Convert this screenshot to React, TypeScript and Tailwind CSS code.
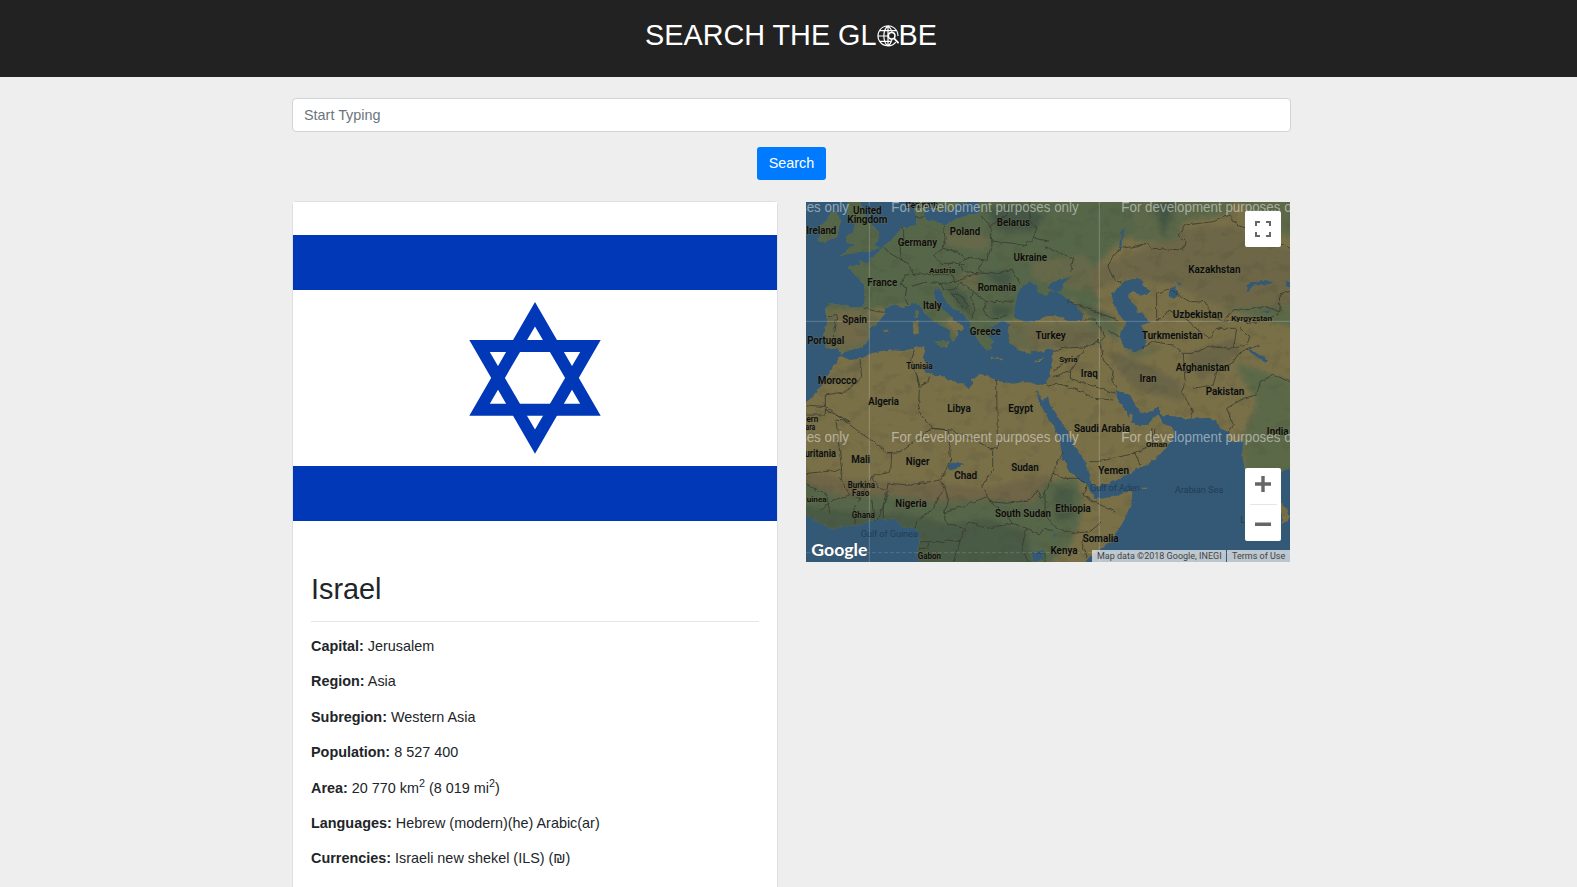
import React from "react";

const land = "#7a7048";
const sea = "#335976";

type P = string;
const europeAsia: P =
  "M250,152 L270,140 290,118 303,98 325,96 348,90 350,66 342,45 346,10 388,10 376,45 372,66 388,80 402,76 430,92 465,74 500,62 522,58 540,52 535,35 545,10 L1480,10 1480,815 1443,830 1425,870 1425,940 1405,985 1390,970 1362,900 1335,825 1327,780 1330,735 1305,742 1278,728 1290,715 1262,702 1245,676 1230,668 1160,672 1120,664 1085,660 1075,636 1058,648 1022,655 1005,628 990,600 968,592 948,586 950,602 972,640 986,668 990,655 998,660 996,682 1010,690 1042,690 1060,670 1076,656 1082,672 1095,690 1115,695 1126,712 1118,730 1104,752 1095,765 1070,790 1045,806 1012,822 980,840 945,858 900,872 880,876 870,855 866,825 850,790 822,748 796,700 768,655 748,625 744,600 740,570 748,538 757,500 760,463 742,462 728,474 705,466 690,474 655,466 640,452 625,440 628,420 620,405 632,388 622,382 605,378 585,390 565,392 575,405 570,418 560,424 582,438 570,446 578,465 556,462 540,444 528,425 512,400 508,378 485,355 455,338 430,306 424,286 414,280 400,288 405,310 428,342 455,368 490,398 486,408 470,404 472,422 460,440 454,425 445,402 425,392 400,378 378,356 362,332 345,320 325,332 300,336 280,328 258,340 256,356 235,380 208,400 208,430 186,458 150,464 124,480 114,462 80,456 72,425 82,378 74,340 95,325 150,336 188,338 196,300 192,268 168,240 140,220 152,211 182,214 178,196 200,206 225,180 Z";
const africa: P =
  "M10,630 L50,590 75,550 105,505 124,483 150,495 185,490 215,475 260,465 310,468 345,458 368,454 376,466 368,490 382,508 372,530 400,540 430,541 447,556 490,566 506,582 520,565 515,551 540,540 568,545 590,557 640,566 665,562 690,562 712,570 740,566 746,590 742,605 728,618 712,590 706,590 720,625 738,660 760,690 780,740 786,782 810,830 855,868 872,888 890,912 940,905 985,890 997,893 995,925 970,980 935,1035 875,1082 850,1110 L365,1110 350,1085 358,1045 360,1020 345,1000 305,994 285,970 240,975 205,980 180,990 135,995 95,1002 60,985 10,955 Z";
const islands: P =
  "M175,10 L190,45 205,80 236,108 234,135 222,150 236,160 200,170 160,172 123,182 146,160 168,150 138,142 142,122 160,110 165,92 150,78 140,55 145,10 Z M50,138 L62,112 55,95 80,78 90,52 112,52 120,78 112,125 75,142 Z M404,438 L446,440 440,461 418,452 Z M338,382 L356,378 356,414 342,420 Z M345,350 L354,344 353,368 344,368 Z M572,488 L610,491 608,496 572,493 Z M704,497 L732,489 722,500 708,502 Z M398,20 L430,22 425,50 405,48 Z M430,10 L520,10 498,24 480,20 460,45 440,52 Z M1440,925 L1458,940 1468,968 1462,983 1446,984 Z M250,406 l12,-3 4,6 -12,5 Z M1028,878 h16 l-4,4 h-10 Z";
const waters: P =
  "M690,262 L712,274 708,290 738,303 748,292 770,290 800,310 830,335 850,358 845,378 812,378 775,364 740,362 715,375 680,382 642,370 645,335 652,300 665,275 Z M742,276 L757,262 812,246 790,265 785,285 765,290 Z M935,296 L968,267 992,252 1024,252 1029,273 1051,288 1025,302 1000,290 984,300 992,320 1010,335 1015,354 1030,352 1036,372 1054,380 1026,390 1036,410 1036,455 1028,466 1000,468 972,456 957,422 970,402 976,382 955,355 940,322 Z M1108,278 L1126,275 1137,296 1120,310 1106,304 Z M1340,272 L1358,258 1424,260 1410,267 1362,268 1348,284 1350,294 1340,284 Z M1455,258 l20,10 v12 l-18,-8 Z M443,806 L470,802 492,806 470,822 448,826 Z M696,1072 L732,1066 728,1094 700,1100 Z M960,168 l-4,-4 10,-60 16,-8 -10,10 -8,50 Z M1382,352 l30,-6 -6,8 Z M1345,460 l60,35 -8,8 -48,-32 Z M760,1005 l8,20 -4,4 Z M1128,262 l20,2 -10,6 Z";
const borders: P =
  "M76,362 L112,362 102,400 104,430 96,452 M188,338 L230,350 256,352 M250,155 L270,175 305,195 300,165 312,130 305,98 M305,195 L325,205 340,238 318,240 300,268 320,280 315,310 325,330 M340,238 L400,235 M345,66 H375 M430,92 L435,130 430,160 400,180 425,205 470,205 495,210 M430,160 L470,170 500,190 560,195 576,150 572,90 540,60 M500,190 L480,205 490,230 550,235 535,222 550,195 M330,275 L375,262 420,265 465,262 455,235 400,240 M420,265 L430,285 460,285 480,262 520,290 545,310 560,320 645,318 M465,262 L490,250 535,232 M450,292 L480,300 505,330 500,345 M455,295 L490,340 M520,290 L515,310 525,345 515,372 M560,320 L550,345 570,372 605,370 625,355 M576,138 L640,145 675,152 700,130 750,138 M550,235 L600,235 635,222 660,265 M576,90 L620,60 625,21 M700,130 L710,100 690,80 690,21 M735,155 L770,170 820,190 812,230 M850,375 L885,375 900,400 915,425 900,440 860,455 790,460 760,470 M800,320 L860,340 900,355 955,375 M760,525 L840,480 M760,545 L812,525 835,490 860,455 M812,525 L810,550 870,570 945,595 M895,435 L905,460 910,495 940,530 935,555 950,580 M925,410 L955,422 M1025,462 L1060,440 1120,450 1150,475 1155,560 1145,590 1180,650 1175,668 M1150,475 L1175,475 1230,455 1300,460 M968,267 L940,250 924,215 935,190 960,160 1000,155 1040,145 1055,160 1150,165 1155,140 1135,125 1155,90 1240,80 1290,60 1310,90 1370,110 1470,160 M1070,374 H1085 L1105,345 1150,365 1200,410 1230,430 M1070,374 V295 L1105,283 1170,320 1215,320 1235,360 1270,380 1300,345 1400,335 1440,352 1438,300 1470,290 M1270,380 L1320,375 1350,385 1400,375 1440,352 M1230,430 L1250,400 1310,400 1300,460 M1300,460 L1340,450 1350,425 1320,400 M1180,580 L1240,570 1250,530 1300,500 1320,470 1380,450 M1278,715 L1300,690 1280,640 1330,610 1370,600 1380,560 1420,540 1470,560 M868,800 L895,800 1005,775 1060,745 1065,700 M1005,775 L1020,808 M1060,745 L1055,700 M740,575 L770,565 850,590 880,610 940,615 M590,555 L592,760 H578 V828 L560,850 548,870 570,920 M350,540 L358,580 355,650 395,700 300,770 262,773 76,635 V600 L140,590 185,545 180,495 M395,700 L455,705 578,762 M395,700 L445,705 452,800 420,855 330,870 265,865 M343,462 L335,495 350,540 360,570 M360,572 L385,560 388,545 M262,773 L275,775 272,830 215,845 M76,635 L20,630 M76,640 V660 H20 M76,645 L150,680 108,675 125,825 20,835 M125,825 L120,850 150,900 180,915 215,845 240,880 265,890 235,975 M150,900 L100,915 60,945 M180,915 L165,930 165,990 M215,915 L225,980 M20,870 L80,900 90,955 M265,865 L250,930 250,970 M345,1000 L350,980 400,940 435,875 420,855 M435,875 L445,920 430,955 445,990 495,1000 510,980 M430,955 L500,930 560,905 M360,1040 H430 L440,1035 480,1040 460,1100 M385,1040 V1060 H360 M510,980 L560,1000 640,985 680,1000 M495,1000 L480,1040 M570,920 L620,925 690,915 712,885 725,910 735,890 M570,920 L620,960 640,990 M680,1000 L720,1020 735,1000 760,1010 M680,1000 L665,1060 685,1100 M735,890 L760,835 790,850 840,850 860,870 M735,890 L735,960 770,1000 820,1015 870,1010 M760,835 L770,800 790,775 M860,870 L850,900 870,915 L945,950 M870,1010 L905,980 M855,1020 L845,1040 860,1090 M710,1075 H735 V1100";
const labels: [string, number, number, number, number?][] = [
  ["Denmark", 365, 38, 96, 25], ["United", 202, 55, 86], ["Kingdom", 202, 82, 120], ["Ireland", 64, 115, 90],
  ["Germany", 352, 153, 118], ["Poland", 495, 120, 91], ["Belarus", 640, 93, 100], ["Ukraine", 691, 198, 101],
  ["Austria", 427, 232, 78, 24], ["France", 247, 271, 90], ["Romania", 591, 287, 116], ["Italy", 397, 341, 56],
  ["Spain", 164, 384, 74], ["Greece", 556, 419, 93], ["Portugal", 77, 446, 111], ["Turkey", 752, 430, 91],
  ["Tunisia", 358, 521, 79, 25], ["Morocco", 112, 565, 117], ["Kazakhstan", 1243, 233, 157],
  ["Uzbekistan", 1193, 368, 149], ["Kyrgyzstan", 1355, 377, 122, 24], ["Turkmenistan", 1117, 430, 182],
  ["Syria", 805, 499, 55, 24], ["Iraq", 868, 544, 51], ["Iran", 1044, 560, 51], ["Afghanistan", 1208, 528, 162],
  ["Algeria", 251, 630, 92], ["Libya", 477, 650, 70], ["Egypt", 662, 650, 74], ["Pakistan", 1275, 598, 116],
  ["ern", 37, 679, 35, 25], ["ara", 31, 703, 29, 25], ["uritania", 61, 784, 94], ["Mali", 182, 804, 57],
  ["Niger", 353, 809, 71], ["Chad", 497, 850, 69], ["Sudan", 675, 828, 83], ["Burkina", 184, 877, 82, 25],
  ["Faso", 182, 902, 52, 25], ["uinea", 50, 919, 60, 24], ["Ghana", 190, 968, 69, 25], ["Nigeria", 333, 934, 94],
  ["South Sudan", 669, 966, 168], ["Gabon", 388, 1091, 70, 25], ["Saudi Arabia", 906, 709, 168],
  ["Oman", 1070, 756, 64, 24], ["India", 1433, 720, 65], ["Yemen", 941, 837, 92], ["Ethiopia", 819, 950, 106],
  ["Somalia", 902, 1040, 108], ["Kenya", 792, 1075, 81],
];

function WorldMap() {
  return (
    <svg viewBox="18 21 1452 1080" className="block h-[360px] w-[484px]" preserveAspectRatio="none">
      <defs>
        <clipPath id="landClip"><path d={europeAsia + africa + islands} /></clipPath>
        <filter id="soft" x="-20%" y="-20%" width="140%" height="140%"><feGaussianBlur stdDeviation="8" /></filter>
        <filter id="rough" x="0" y="0" width="100%" height="100%" colorInterpolationFilters="sRGB">
          <feTurbulence type="fractalNoise" baseFrequency="0.06" numOctaves="2" seed="4" result="n" />
          <feDisplacementMap in="SourceGraphic" in2="n" scale="12" xChannelSelector="R" yChannelSelector="G" />
        </filter>
        <filter id="relief" x="0" y="0" width="100%" height="100%" colorInterpolationFilters="sRGB">
          <feTurbulence type="fractalNoise" baseFrequency="0.022 0.03" numOctaves="4" seed="9" />
          <feColorMatrix values="0 0 0 0 0.30  0 0 0 0 0.31  0 0 0 0 0.22  0 6 0 0 -3.3" />
        </filter>
      </defs>
      <rect x="0" y="0" width="1500" height="1120" fill={sea} />
      <g filter="url(#rough)">
        <g clipPath="url(#landClip)">
          <rect x="0" y="0" width="1500" height="1120" fill={land} />
          <g filter="url(#soft)">
            <path fill="#54664a" d="M0,0 H1010 L1120,60 960,140 900,200 880,260 900,330 850,350 820,310 620,380 600,470 520,480 480,350 430,380 480,430 400,480 330,330 200,345 60,345 Z" />
            <path fill="#66694a" d="M60,350 L200,350 250,370 200,470 60,480 Z M430,110 L570,120 560,170 440,150 Z M470,240 L540,230 530,290 490,280 Z M690,200 L850,180 900,240 840,290 700,250 Z M600,390 L900,385 900,450 620,470 Z" />
            <path fill="#72694a" d="M110,340 L190,360 200,440 120,450 Z M680,405 L860,400 880,440 700,450 Z" />
            <path fill="#6d6647" d="M940,200 L1060,150 1160,100 1300,90 1480,170 1480,340 1250,330 1120,270 960,250 870,300 880,220 Z" />
            <path fill="#5b674a" d="M1000,0 H1300 L1290,60 1150,80 1130,140 1000,140 Z M1300,0 h180 v130 l-90,-30 Z M860,340 l100,50 -10,50 -80,-60 Z M970,455 l70,14 20,-12 10,14 -70,14 Z" />
            <path fill="#445644" d="M1060,20 h70 l-40,110 Z M550,40 L660,30 740,60 700,110 600,110 Z M550,235 L640,230 620,290 Z M580,330 L640,335 630,360 570,370 Z M430,260 L480,340 520,370 500,300 Z M800,320 L910,350 960,380 860,350 Z" />
            <path fill="#6b6547" d="M920,470 L980,560 1060,600 1150,620 1140,560 1000,490 Z M1160,480 L1300,430 1330,470 1200,560 Z M770,400 l130,20 -20,30 -110,0 Z M80,560 L180,520 200,490 80,550 Z" />
            <path fill="#5c694a" d="M1310,500 L1480,560 1480,860 1330,860 1330,720 1370,620 1320,540 Z M1250,340 L1480,330 1480,400 1300,350 Z" />
            <path fill="#6f6546" d="M0,830 L130,850 260,860 420,865 560,880 690,850 740,840 780,860 760,940 0,940 Z" />
            <path fill="#57664a" d="M0,860 L130,905 260,900 400,920 560,915 700,925 740,860 830,850 850,920 840,980 810,1050 740,1120 0,1120 Z" />
            <path fill="#4a5a45" d="M0,930 L150,950 340,960 430,990 560,970 680,1010 700,1120 0,1120 Z M760,880 L820,880 820,970 770,980 Z" />
          </g>
          <rect x="0" y="0" width="1500" height="1120" filter="url(#relief)" opacity="0.17" />
        </g>
        <path d={waters} fill={sea} />
        <path d={borders} fill="none" stroke="#36382f" strokeWidth="3" strokeOpacity="0.8" strokeLinejoin="round" />
      </g>
      <path d="M208,21 V1101 M898,21 V1101 M18,379 H1470" stroke="#fff" strokeOpacity="0.22" strokeWidth="3" />
      <path d="M18,1073 H1470" stroke="#fff" strokeOpacity="0.15" strokeWidth="3" strokeDasharray="12 6" />
      <g fontFamily="Roboto, sans-serif" textAnchor="middle" fill="#233d54" fontSize="28">
        <text x="268" y="1025" textLength="171">Gulf of Guinea</text>
        <text x="945" y="887" textLength="150">Gulf of Aden</text>
        <text x="1197" y="893" textLength="146">Arabian Sea</text>
        <text x="1328" y="985">L</text>
      </g>
      <g fontFamily="Roboto, sans-serif" fontWeight="600" textAnchor="middle" fill="#0c0c0c" stroke="#6f6f50" strokeOpacity="0.4" strokeWidth="5" paintOrder="stroke" strokeLinejoin="round">
        {labels.map(([name, x, y, w, size]) => (
          <text key={name} x={x} y={y + 1} textLength={w} lengthAdjust="spacingAndGlyphs" fontSize={size ?? 31}>{name}</text>
        ))}
      </g>
      <g fontFamily="'Liberation Sans', Arial, sans-serif" fill="#fff" fillOpacity="0.48" fontSize="42">
        {[51, 741].map((y) => (
          <g key={y}>
            <text x="147" y={y} textAnchor="end" textLength="562" lengthAdjust="spacingAndGlyphs">For development purposes only</text>
            <text x="274" y={y} textLength="562" lengthAdjust="spacingAndGlyphs">For development purposes only</text>
            <text x="964" y={y} textLength="562" lengthAdjust="spacingAndGlyphs">For development purposes only</text>
          </g>
        ))}
      </g>
      <text x="34" y="1082" textLength="168" lengthAdjust="spacingAndGlyphs" fontFamily="Lato, sans-serif" fontWeight="700" fontSize="53" fill="#fff" stroke="#444" strokeOpacity="0.35" strokeWidth="4" paintOrder="stroke">Google</text>
    </svg>
  );
}

function GlobeIcon() {
  return (
    <svg viewBox="0 0 24 24" className="inline-block size-[22px] align-[-2px]" fill="none" stroke="#fff" strokeWidth="1.3">
      <path d="M20.500 18.600A10.900 10.900 0 1 1 22.900 12M12 1.100V22.900M1.100 12H12M3 6.200H21M3 17.800H16M12 1.100C6 5.500 6 18.500 12 22.900M12 1.100C14.500 3 16 5.200 16.500 7.500M12 22.900C14 21.400 15.400 19.300 16.200 16.500" />
      <circle cx="16" cy="11.800" r="3.600" fill="#222" strokeWidth="1.700" />
      <path d="M18.600 14.500L23.500 19.700" strokeWidth="1.900" />
    </svg>
  );
}

function Flag() {
  return (
    <svg viewBox="0 0 484 352" className="block h-[352px] w-full" preserveAspectRatio="none">
      <rect width="484" height="352" fill="#fff" />
      <path d="M0 33H484V88H0ZM0 264H484V319H0Z" fill="#0038b8" />
      <path fillRule="evenodd" fill="#0038b8" d="M242 100 307.700 213.700H176.300ZM242 124.500 196.800 201.700H287.200Z" />
      <path fillRule="evenodd" fill="#0038b8" d="M242 251.700 176.300 138H307.700ZM242 227.500 196.800 150H287.200Z" />
    </svg>
  );
}

function Fact({ label, children }: { label: string; children: React.ReactNode }) {
  return (
    <p className="mb-[14px]">
      <strong className="font-bold">{label}:</strong> {children}
    </p>
  );
}

export default function App() {
  return (
    <div className="h-[887px] overflow-hidden bg-[#eee] font-['Liberation_Sans',Arial,sans-serif] text-[14.400px] leading-[21.400px] text-[#212529]">
      <header className="flex h-[77px] justify-center bg-[#222] pt-[18px] pl-[5px]">
        <h1 className="text-[28.800px] leading-[35px] whitespace-nowrap text-white">SEARCH THE GL<GlobeIcon />BE</h1>
      </header>
      <main className="ml-[292px] w-[999px] pt-[21px]">
        <input className="block h-[34px] w-full rounded-[4px] border border-[#ced4da] bg-white px-[11px] placeholder:text-[#6c757d]" placeholder="Start Typing" />
        <div className="flex justify-center pt-[15px]">
          <button className="h-[33px] w-[69px] rounded-[3px] bg-[#007bff] text-white">Search</button>
        </div>
        <div className="mt-[21px] flex items-start gap-[28px]">
          <section className="h-[760px] w-[486px] rounded-[4px] border border-[#dfdfdf] bg-white">
            <Flag />
            <div className="p-[18px]">
              <h2 className="text-[28.800px] leading-[34px]">Israel</h2>
              <hr className="mt-[15px] mb-[14px] border-[#e5e5e5]" />
              <Fact label="Capital">Jerusalem</Fact>
              <Fact label="Region">Asia</Fact>
              <Fact label="Subregion">Western Asia</Fact>
              <Fact label="Population">8 527 400</Fact>
              <Fact label="Area">20 770 km<sup>2</sup> (8 019 mi<sup>2</sup>)</Fact>
              <Fact label="Languages">Hebrew (modern)(he) Arabic(ar)</Fact>
              <Fact label="Currencies">Israeli new shekel (ILS) (₪)</Fact>
            </div>
          </section>
          <section className="relative mt-px h-[360px] w-[484px] overflow-hidden">
            <WorldMap />
            <button className="absolute top-[9px] right-[9px] flex size-[36px] items-center justify-center rounded-[2px] bg-white">
              <svg viewBox="0 0 16 16" className="size-[16px]" fill="none" stroke="#666" strokeWidth="2">
                <path d="M1 5V1H5M11 1H15V5M15 11V15H11M5 15H1V11" />
              </svg>
            </button>
            <div className="absolute right-[9px] bottom-[21px] flex h-[73px] w-[36px] flex-col items-center rounded-[2px] bg-white">
              <svg viewBox="0 0 16 16" className="mt-[8px] size-[16px]" fill="#666"><path d="M6.300 0h3.400v6.300H16v3.400H9.700V16h-3.400V9.700H0v-3.400h6.300z" /></svg>
              <div className="mt-[12px] h-px w-[27px] bg-[#e6e6e6]" />
              <svg viewBox="0 0 16 16" className="mt-[11px] size-[16px]" fill="#666"><path d="M0 6.500h16v3.500H0z" /></svg>
            </div>
            <div className="absolute right-0 bottom-0 flex h-[12px] w-[198px] justify-between font-['Roboto',sans-serif] text-[9px] leading-[12px] whitespace-nowrap text-[#444]">
              <span className="w-[134px] bg-[#f5f5f5]/70 pl-[5px]">Map data ©2018 Google, INEGI</span>
              <span className="w-[63px] bg-[#f5f5f5]/70 pl-[5px]">Terms of Use</span>
            </div>
          </section>
        </div>
      </main>
    </div>
  );
}
